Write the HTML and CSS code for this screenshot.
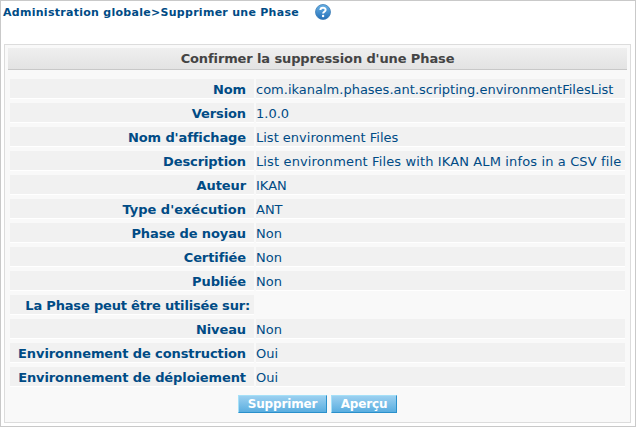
FILE: index.html
```
<!DOCTYPE html>
<html lang="fr">
<head>
<meta charset="utf-8">
<title>Supprimer une Phase</title>
<link rel="stylesheet" href="styles.css">
</head>
<body>
<header class="crumbs"><span>Administration globale&gt;Supprimer une Phase</span>
<svg class="help" viewBox="0 0 16 16" aria-hidden="true"><defs><linearGradient id="g" x2="0" y2="1"><stop stop-color="#69b2e6"/><stop offset="1" stop-color="#246fb8"/></linearGradient></defs><circle cx="8" cy="8" r="7.5" fill="url(#g)" stroke="#3f7db5" stroke-width=".8"/><path d="M5.4 6.1C5.4 2.9 10.7 3 10.6 6C10.5 7.8 8.1 7.7 8.1 9.6" fill="none" stroke="#fff" stroke-width="2"/><circle cx="8.1" cy="12" r="1.2" fill="#fff"/></svg></header>
<main class="panel">
<h1>Confirmer la suppression d'une Phase</h1>
<dl class="fields">
<dt>Nom</dt><dd>com.ikanalm.phases.ant.scripting.environmentFilesList</dd>
<dt>Version</dt><dd>1.0.0</dd>
<dt>Nom d'affichage</dt><dd>List environment Files</dd>
<dt>Description</dt><dd class="description">List environment Files with IKAN ALM infos in a CSV file</dd>
<dt>Auteur</dt><dd>IKAN</dd>
<dt class="type">Type d'exécution</dt><dd>ANT</dd>
<dt>Phase de noyau</dt><dd>Non</dd>
<dt>Certifiée</dt><dd>Non</dd>
<dt>Publiée</dt><dd>Non</dd>
<dt class="section">La Phase peut être utilisée sur:</dt><dd class="empty"></dd>
<dt>Niveau</dt><dd>Non</dd>
<dt>Environnement de construction</dt><dd>Oui</dd>
<dt>Environnement de déploiement</dt><dd>Oui</dd>
</dl>
<div class="actions"><button>Supprimer</button><button>Aperçu</button></div>
</main>
</body>
</html>
```
FILE: styles.css
```
* { box-sizing: border-box; }
body {
  margin: 0;
  height: 427px;
  border: 1px solid #c9c9c9;
  background: #fff;
  color: #004b85;
  font: 13px/19px Verdana, "DejaVu Sans", sans-serif;
}
.crumbs {
  display: flex;
  align-items: center;
  gap: 16px;
  height: 22px;
  padding-left: 2px;
  font-size: 11px;
  font-weight: bold;
  letter-spacing: 0.28px;
  white-space: nowrap;
}
.help { width: 16px; height: 16px; }
.panel {
  margin: 21px 4px 0 3px;
  width: 627px;
  height: 379px;
  padding: 3px;
  border: 1px solid #dcdcdc;
  background: #f9f9f9;
}
h1 {
  margin: 0;
  height: 22px;
  border-bottom: 1px solid #c8c8c8;
  background: linear-gradient(#efefef, #e3e3e3);
  color: #444;
  font-size: 13px;
  letter-spacing: -0.12px;
  line-height: 21px;
  text-align: center;
}
.fields {
  display: grid;
  grid-template-columns: 244px 369px;
  grid-auto-rows: 20px;
  gap: 4px 2px;
  margin: 9px 2px 0;
}
dt, dd {
  margin: 0;
  border-bottom: 1px solid #fff;
  background: #f1f1f1;
  line-height: 21px;
  white-space: nowrap;
}
dt { padding-right: 8px; font-weight: bold; letter-spacing: -0.1px; text-align: right; }
dt.type { letter-spacing: 0; }
dt.section { padding-right: 4px; letter-spacing: -0.18px; }
dd.description { letter-spacing: 0.13px; }
dd.empty { background: none; border: 0; }
.actions { display: flex; justify-content: center; gap: 4px; margin-top: 8px; }
button {
  height: 18px;
  width: 89px;
  padding: 0;
  border: 1px solid;
  border-color: #a5e0f8 #2a90cb #2a90cb #a5e0f8;
  background: linear-gradient(#9bd0f0, #5aaee0);
  color: #fff;
  font: bold 12px/16px Verdana, "DejaVu Sans", sans-serif;
  letter-spacing: -0.15px;
}
button + button { width: 66px; }
```
